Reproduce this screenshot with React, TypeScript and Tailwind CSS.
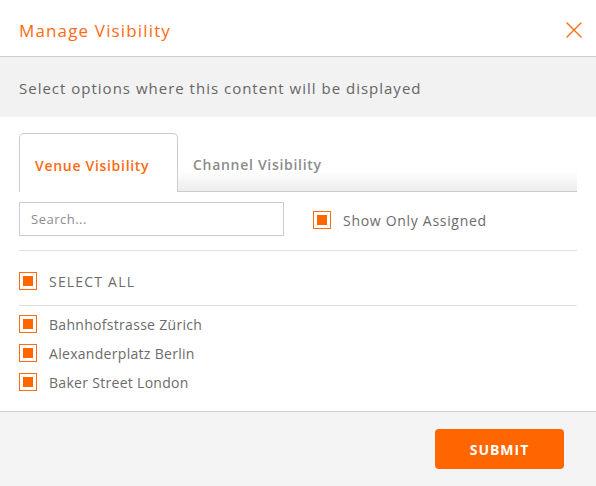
const venues = ['Bahnhofstrasse Zürich', 'Alexanderplatz Berlin', 'Baker Street London']

function Check() {
  return (
    <span className="flex size-[18px] shrink-0 items-center justify-center border-[1.5px] border-[#ff6a13] bg-white">
      <span className="size-[10px] bg-[#ff6600]" />
    </span>
  )
}

function CloseIcon() {
  return (
    <svg viewBox="0 0 16 16" className="size-[16px]" fill="none" stroke="#ff6a13" strokeWidth="1.4" strokeLinecap="round">
      <path d="M1 1l14 14M15 1L1 15" />
    </svg>
  )
}

export default function App() {
  return (
    <div className="flex h-[486px] w-[596px] flex-col bg-white font-['Open_Sans',sans-serif] tracking-[0.7px] text-[#6b6b6b]">
      <div className="flex h-[57px] shrink-0 items-center justify-between border-b border-[#cccccc] pl-[19px] pr-[14px] pt-[3px]">
        <h1 className="pt-[3px] text-[17px] tracking-[1.15px] text-[#ff6a13]">Manage Visibility</h1>
        <CloseIcon />
      </div>

      <div className="flex h-[60px] shrink-0 items-center bg-[#f2f2f2] px-[19px] pt-[2px] text-[15px] tracking-[1px] text-[#666666]">
        Select options where this content will be displayed
      </div>

      <div className="flex-1 px-[19px] pt-[16px]">
        <div className="flex h-[59px] items-stretch">
          <div className="flex w-[159px] items-center rounded-t-[5px] border border-b-0 border-[#cccccc] pl-[15px] pt-[5px] text-[14px] font-semibold text-[#ff6a13]">
            Venue Visibility
          </div>
          <div className="flex flex-1 items-center border-b border-[#cccccc] bg-gradient-to-b from-white from-65% to-[#ececec] pl-[15px] pt-[4px] text-[14px] font-semibold text-[#8c8c8c]">
            Channel Visibility
          </div>
        </div>

        <div className="flex h-[59px] items-center border-b border-[#dddddd] pb-[4px]">
          <input
            placeholder="Search..."
            className="h-[34px] w-[265px] border border-[#cccccc] px-[11px] text-[13px] tracking-[0.5px] outline-none placeholder:text-[#8c8c8c]"
          />
          <label className="ml-[29px] flex items-center gap-[12px] pt-[2px] text-[14px] text-[#6b6b6b]">
            <Check />
            Show Only Assigned
          </label>
        </div>

        <div className="flex h-[55px] items-center gap-[12px] border-b border-[#dddddd] pt-[6px] text-[14px] tracking-[1.2px] text-[#6b6b6b]">
          <Check />
          SELECT ALL
        </div>

        <ul className="flex flex-col gap-[11px] pt-[9px]">
          {venues.map((v) => (
            <li key={v} className="flex h-[18px] items-center gap-[12px] text-[14px] tracking-[0.3px] text-[#6b6b6b]">
              <Check />
              {v}
            </li>
          ))}
        </ul>
      </div>

      <div className="flex h-[75px] shrink-0 items-center justify-end border-t border-[#cccccc] bg-[#f4f4f4] pr-[32px]">
        <button className="h-[40px] w-[129px] rounded-[4px] bg-[#ff6600] text-[14px] font-bold tracking-[1px] text-white">
          SUBMIT
        </button>
      </div>
    </div>
  )
}
